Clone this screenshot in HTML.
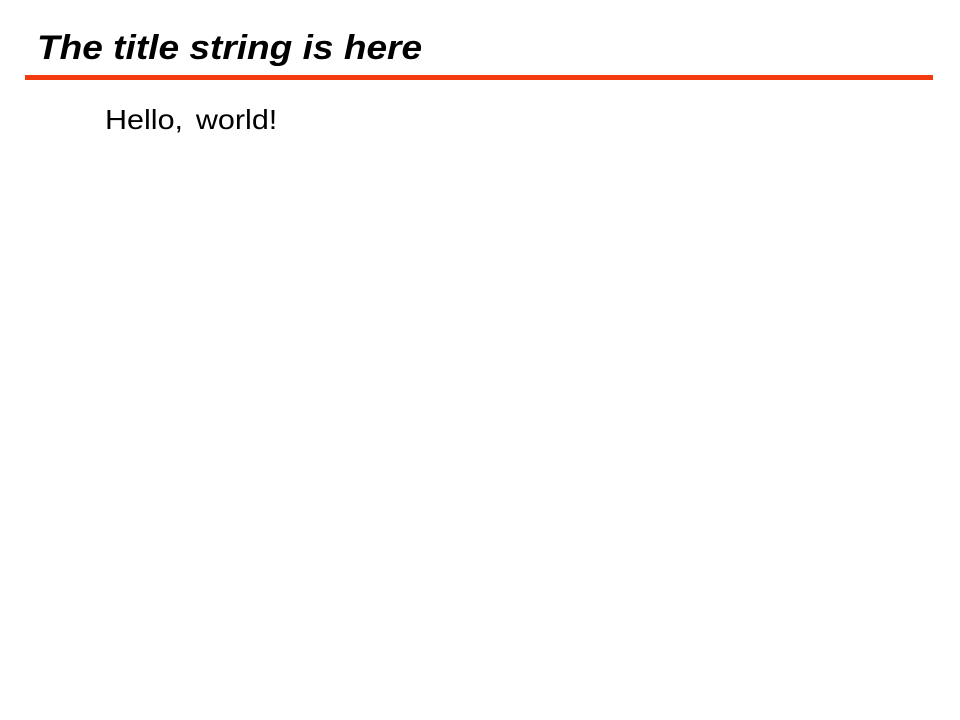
<!DOCTYPE html>
<html><head><style>
html,body{margin:0;padding:0;background:#fff;width:960px;height:720px;overflow:hidden}
body{position:relative;font-family:"Liberation Sans",Arial,sans-serif;color:#000}
.t{position:absolute;left:37px;top:28px;font-size:34px;font-weight:bold;font-style:italic;line-height:40px;white-space:nowrap;transform:scaleX(1.09);transform-origin:0 0}
.l{position:absolute;left:25px;top:75px;width:908px;height:5px;background:#f23c10}
.h{position:absolute;left:105px;top:103px;font-size:28px;line-height:34px;white-space:nowrap;word-spacing:4px;transform:scaleX(1.09);transform-origin:0 0}
</style></head><body>
<div class="t">The title string is here</div>
<div class="l"></div>
<div class="h">Hello, world!</div>
</body></html>
